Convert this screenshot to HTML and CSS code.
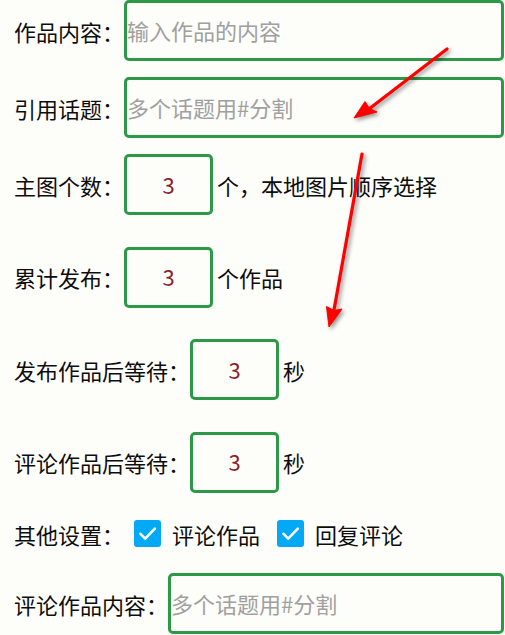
FILE: index.html
```html
<!DOCTYPE html>
<html lang="zh-CN">
<head>
<meta charset="utf-8">
<title>设置</title>
<link rel="stylesheet" href="styles.css">
</head>
<body>
<div class="page">
  <div class="form">
    <div class="row first">
      <span class="label">作品内容：</span>
      <input class="field text" type="text" placeholder="输入作品的内容">
    </div>
    <div class="row near">
      <span class="label">引用话题：</span>
      <input class="field text" type="text" placeholder="多个话题用#分割">
    </div>
    <div class="row near">
      <span class="label">主图个数：</span>
      <input class="field num" type="text" value="3">
      <span class="suffix">个，本地图片顺序选择</span>
    </div>
    <div class="row">
      <span class="label">累计发布：</span>
      <input class="field num" type="text" value="3">
      <span class="suffix">个作品</span>
    </div>
    <div class="row">
      <span class="label">发布作品后等待：</span>
      <input class="field num" type="text" value="3">
      <span class="suffix">秒</span>
    </div>
    <div class="row">
      <span class="label">评论作品后等待：</span>
      <input class="field num" type="text" value="3">
      <span class="suffix">秒</span>
    </div>
    <div class="row opts">
      <span class="label">其他设置：</span>
      <span class="check first-check"><svg viewBox="0 0 27 27" width="27" height="27"><path d="M6.5 13.8 L11.2 18.6 L20.8 8.6" fill="none" stroke="#fff" stroke-width="2.6" stroke-linecap="round" stroke-linejoin="round"/></svg></span>
      <span class="check-label">评论作品</span>
      <span class="check second-check"><svg viewBox="0 0 27 27" width="27" height="27"><path d="M6.5 13.8 L11.2 18.6 L20.8 8.6" fill="none" stroke="#fff" stroke-width="2.6" stroke-linecap="round" stroke-linejoin="round"/></svg></span>
      <span class="check-label">回复评论</span>
    </div>
    <div class="row after-opts">
      <span class="label">评论作品内容：</span>
      <input class="field text" type="text" placeholder="多个话题用#分割">
    </div>
  </div>
  <svg class="arrows" viewBox="0 0 505 635" width="505" height="635">
    <g fill="#ff0000" stroke="#ff0000">
      <line x1="447" y1="49" x2="369" y2="109" stroke-width="3.2" stroke-linecap="round"/>
      <path d="M354 118 L365 101.5 L369.5 108.5 L377 112 Z" stroke-width="1" stroke-linejoin="round"/>
      <line x1="362" y1="154" x2="334" y2="310" stroke-width="3.2" stroke-linecap="round"/>
      <path d="M329 327 L326.5 306.5 L334 310.5 L342 309 Z" stroke-width="1" stroke-linejoin="round"/>
    </g>
  </svg>
</div>
</body>
</html>
```
FILE: styles.css
```css
html, body {
  margin: 0;
  padding: 0;
  background: #fdfdfa;
}

body {
  width: 505px;
  height: 635px;
  overflow: hidden;
  font-family: "Noto Sans CJK SC", "Noto Sans", sans-serif;
  font-size: 22px;
  font-weight: 400;
  color: #0d0d0d;
}

.page {
  position: relative;
  width: 505px;
  height: 635px;
}

.form {
  display: flex;
  flex-direction: column;
  padding-left: 14px;
  padding-right: 1px;
}

.row {
  display: flex;
  align-items: center;
  height: 61px;
  margin-top: 31.5px;
}

.row.first {
  margin-top: 0;
}

.row.near {
  margin-top: 16px;
}

.row.opts {
  height: 27px;
  margin-top: 27.5px;
}

.row.after-opts {
  margin-top: 26px;
}

.label {
  white-space: nowrap;
  flex: none;
}

.field {
  box-sizing: border-box;
  height: 61px;
  border: 3px solid #2d9848;
  border-radius: 5px;
  background: transparent;
  padding: 0 0 2px;
  margin: 0;
  font-family: "Noto Sans CJK SC", "Noto Sans", sans-serif;
  font-size: 22px;
  font-weight: 400;
  outline: none;
}

.field.text {
  flex: 1;
  min-width: 0;
  color: #222;
}

.field.text::placeholder {
  color: #a0a0a0;
}

.field.num {
  width: 89px;
  flex: none;
  text-align: center;
  color: #8b1f2e;
}

.suffix {
  margin-left: 4px;
  white-space: nowrap;
}

.check {
  display: inline-flex;
  width: 27px;
  height: 27px;
  border-radius: 3px;
  background: #03a9f4;
  flex: none;
}

.first-check {
  margin-left: 10px;
}

.second-check {
  margin-left: 17px;
}

.check-label {
  margin-left: 11px;
  white-space: nowrap;
}

.arrows {
  position: absolute;
  left: 0;
  top: 0;
  pointer-events: none;
  filter: drop-shadow(2px 2px 2px rgba(0, 0, 0, 0.45));
}
```
